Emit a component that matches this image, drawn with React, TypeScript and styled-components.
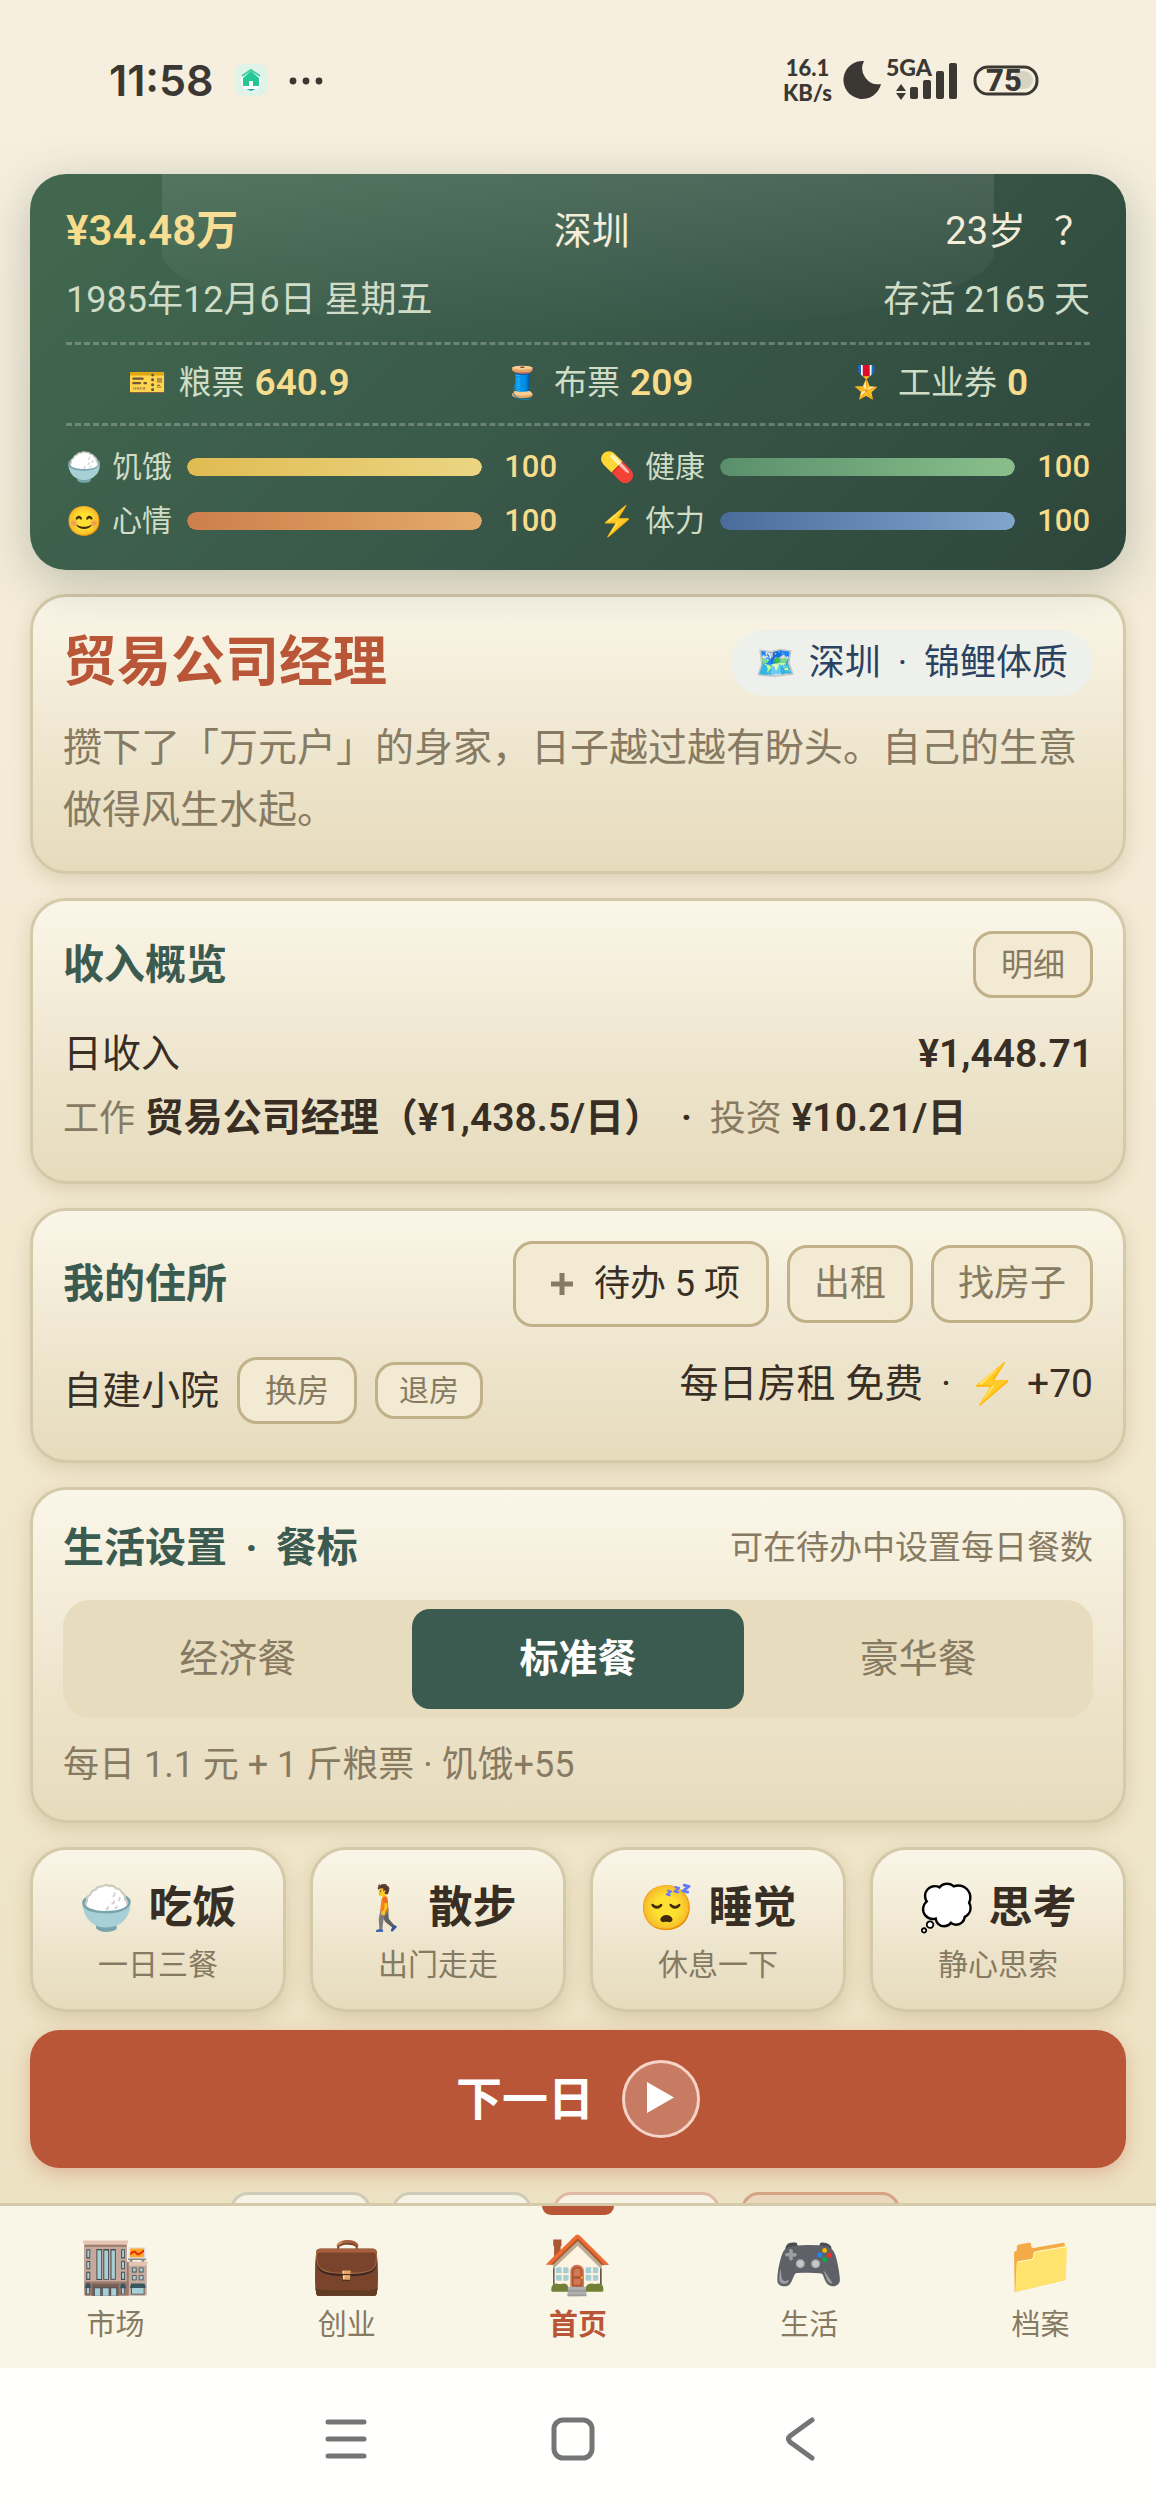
import React, { useState } from "react";
import styled, { createGlobalStyle, css } from "styled-components";

const c = {
  ink: "#382e24",
  muted: "#877a62",
  green: "#3c5b50",
  red: "#b95638",
  gold: "#f7dc8c",
  mint: "#cfdcc6",
  cream: "#f3ecd8",
  line: "#d4c9a8",
  buttonLine: "#c1b189",
  buttonFill: "#f2ead3",
  status: "#3b3833",
};

const Global = createGlobalStyle`
  *, *::before, *::after { box-sizing: border-box; }
  body { margin: 0; }
  h1, h2, p, dl, dd, dt { margin: 0; font-weight: inherit; }
  button { font: inherit; color: inherit; border: 0; background: none; padding: 0; cursor: pointer; }
  b, strong { font-weight: 600; }
`;

const Shell = styled.div`
  display: flex;
  flex-direction: column;
  height: 100vh;
  color: ${c.ink};
  font-family: Roboto, "Noto Sans CJK SC", "Noto Color Emoji", sans-serif;
  font-size: 39px;
  line-height: 60px;
  background: linear-gradient(180deg, #f6efdf 0%, #f2e9d1 50%, #ece1c1 90%);
`;

/* ---------- status bar ---------- */
const StatusBar = styled.header`
  display: flex;
  justify-content: space-between;
  align-items: center;
  flex: none;
  padding: 48px 117px 62px 109px;
  color: ${c.status};
`;

const StatusGroup = styled.div<{ $gap: number }>`
  display: flex;
  align-items: center;
  gap: ${(p) => p.$gap}px;
  height: 64px;
`;

const Clock = styled.time`
  font: 600 43px/64px Inter, sans-serif;
`;

const Speed = styled.div`
  font: 900 22px/25px Lato, sans-serif;
  text-align: center;
`;

const Signal = styled.svg`
  display: block;
  flex: none;
`;

/* ---------- content ---------- */
const Main = styled.main`
  display: flex;
  flex-direction: column;
  flex: 1;
  gap: 24px;
  min-height: 0;
  padding: 0 30px;
  margin-top: -50px;
  padding-top: 50px;
  overflow: hidden auto;
  scrollbar-width: none;
  & > * { flex: none; }
`;

const Hero = styled.section`
  position: relative;
  z-index: 1;
  padding: 24px 36px 22px;
  border-radius: 36px;
  color: ${c.cream};
  background: linear-gradient(135deg, #42694f 0%, #3a5a4a 45%, #2d463b 100%);
  box-shadow: 0 12px 48px rgba(45, 70, 59, 0.28);
  &::before {
    content: "";
    position: absolute;
    top: 0;
    left: 12%;
    right: 12%;
    height: 40%;
    border-radius: 0 0 50% 50%;
    background: linear-gradient(180deg, rgba(255, 255, 255, 0.1), rgba(255, 255, 255, 0));
  }
`;

const HeroTop = styled.div`
  display: flex;
  justify-content: space-between;
  align-items: center;
  height: 66px;
  font-size: 38px;
`;

const Money = styled.strong`
  font-size: 42px;
  color: ${c.gold};
`;

const Age = styled.div`
  display: flex;
  gap: 28px;
`;

const HelpButton = styled.button`
  width: 36px;
`;

const HeroDate = styled.div`
  display: flex;
  justify-content: space-between;
  align-items: center;
  height: 78px;
  padding-bottom: 6px;
  font-size: 36px;
  color: ${c.mint};
`;

const Tickets = styled.dl`
  display: flex;
  justify-content: space-around;
  align-items: center;
  gap: 30px;
  height: 84px;
  padding-bottom: 2px;
  border: dashed rgba(255, 255, 255, 0.25);
  border-width: 3px 0;
`;

const Ticket = styled.div`
  display: flex;
  align-items: center;
  gap: 10px;
  font-size: 33px;
  dt { display: flex; gap: 12px; color: ${c.mint}; }
  dd { font-size: 37px; font-weight: 600; color: ${c.gold}; }
`;

const TicketIcon = styled.span`
  font-size: 31px;
`;

const Stats = styled.div`
  display: grid;
  grid-template-columns: 1fr 1fr;
  column-gap: 42px;
  padding-top: 14px;
`;

const Stat = styled.label`
  display: grid;
  grid-template-columns: 109px 1fr 63px;
  align-items: center;
  column-gap: 12px;
  height: 54px;
  font-size: 30px;
  line-height: 54px;
  color: ${c.mint};
`;

const StatName = styled.span`
  display: flex;
  gap: 8px;
  white-space: nowrap;
  i { font-style: normal; font-size: 29px; width: 38px; }
`;

const Meter = styled.progress<{ $from: string; $to: string }>`
  appearance: none;
  display: block;
  width: 100%;
  height: 18px;
  border: 0;
  border-radius: 9px;
  overflow: hidden;
  background: rgba(0, 0, 0, 0.2);
  &::-webkit-progress-bar { background: transparent; }
  &::-webkit-progress-value {
    border-radius: 9px;
    background: linear-gradient(90deg, ${(p) => p.$from}, ${(p) => p.$to});
  }
`;

const StatValue = styled.b`
  font-size: 31px;
  font-weight: 500;
  text-align: right;
  color: ${c.gold};
`;

const surface = css`
  border: 3px solid ${c.line};
  border-radius: 36px;
  background: linear-gradient(180deg, #faf6e8 0%, #f7f1e0 18%, #ece3ca 65%, #e7dbbc 100%);
  background-origin: border-box;
  box-shadow: 0 6px 18px rgba(120, 95, 45, 0.18);
`;

const Card = styled.section`
  ${surface}
  padding: 30px 30px;
`;

const Row = styled.div<{ $h?: number; $mt?: number; $top?: boolean }>`
  display: flex;
  justify-content: space-between;
  align-items: ${(p) => (p.$top ? "flex-start" : "center")};
  min-height: ${(p) => p.$h ?? 64}px;
  margin-top: ${(p) => p.$mt ?? 0}px;
`;

const JobTitle = styled.h1`
  font-size: 54px;
  line-height: 72px;
  font-weight: 700;
  color: ${c.red};
`;

const Tag = styled.span`
  display: flex;
  gap: 12px;
  padding: 0 25px;
  border-radius: 33px;
  font-size: 36px;
  line-height: 66px;
  color: #2c4261;
  background: #eef1eb;
  i { font-style: normal; font-size: 33px; }
`;

const Dot = styled.span`
  margin: 0 8px;
  &::before { content: "·"; }
`;

const Story = styled.p`
  margin-top: 18px;
  line-height: 62px;
  color: ${c.muted};
`;

const Heading = styled.h2`
  font-size: 41px;
  line-height: 56px;
  font-weight: 700;
  color: ${c.green};
`;

const Group = styled.div`
  display: flex;
  align-items: center;
  gap: 18px;
`;

const sizes = {
  small: { h: 57, px: 21, fs: 30 },
  medium: { h: 67, px: 25, fs: 32 },
  large: { h: 78, px: 24, fs: 36 },
  wide: { h: 86, px: 26, fs: 36 },
};

const OutlineButton = styled.button<{ $size: keyof typeof sizes; $strong?: boolean }>`
  display: flex;
  align-items: center;
  gap: 20px;
  height: ${(p) => sizes[p.$size].h}px;
  padding: 0 ${(p) => sizes[p.$size].px}px;
  border: 3px solid ${c.buttonLine};
  border-radius: 20px;
  font-size: ${(p) => sizes[p.$size].fs}px;
  line-height: 48px;
  color: ${(p) => (p.$strong ? c.ink : c.muted)};
  background: ${c.buttonFill};
  white-space: nowrap;
`;

const Plus = styled.svg`
  display: block;
  margin-left: 8px;
`;

const Rent = styled.span`
  line-height: 54px;
`;

const Breakdown = styled.p`
  line-height: 64px;
`;

const Soft = styled.span`
  font-size: 36px;
  color: ${c.muted};
`;

const Hint = styled.span`
  font-size: 33px;
  line-height: 56px;
  color: ${c.muted};
`;

const Segments = styled.div`
  display: grid;
  grid-template-columns: repeat(3, 1fr);
  gap: 9px;
  margin-top: 24px;
  padding: 9px;
  border-radius: 27px;
  background: #e7dcbe;
`;

const Segment = styled.button<{ $on: boolean }>`
  height: 100px;
  border-radius: 18px;
  font-weight: ${(p) => (p.$on ? 700 : 400)};
  color: ${(p) => (p.$on ? "#fff" : c.muted)};
  background: ${(p) => (p.$on ? c.green : "transparent")};
`;

const MealNote = styled.p`
  margin-top: 22px;
  font-size: 36px;
  line-height: 50px;
  color: ${c.muted};
`;

const Actions = styled.div`
  display: grid;
  grid-template-columns: repeat(4, 1fr);
  gap: 24px;
`;

const Action = styled.button`
  ${surface}
  display: flex;
  flex-direction: column;
  align-items: center;
  gap: 4px;
  padding: 28px 0 21px;
`;

const ActionName = styled.span`
  display: flex;
  gap: 14px;
  font-size: 44px;
  line-height: 60px;
  font-weight: 700;
`;

const ActionHint = styled.span`
  font-size: 30px;
  line-height: 46px;
  color: ${c.muted};
`;

const NextDay = styled.button`
  display: flex;
  justify-content: center;
  align-items: center;
  gap: 28px;
  height: 138px;
  margin-top: -6px;
  border-radius: 30px;
  font-size: 46px;
  font-weight: 700;
  color: #fff;
  background: ${c.red};
  box-shadow: 0 6px 18px rgba(185, 86, 56, 0.3);
`;

const Chips = styled.div`
  display: flex;
  justify-content: center;
  gap: 21px;
  padding-right: 26px;
`;

const Chip = styled.button<{ $w: number; $line: string; $fill: string }>`
  width: ${(p) => p.$w}px;
  height: 72px;
  border: 3px solid ${(p) => p.$line};
  border-radius: 18px;
  background: ${(p) => p.$fill};
`;

/* ---------- bottom bars ---------- */
const TabBar = styled.nav`
  display: grid;
  grid-template-columns: repeat(5, 1fr);
  flex: none;
  height: 165px;
  border-top: 3px solid ${c.line};
  background: #faf6e7;
`;

const Tab = styled.a<{ $on: boolean }>`
  position: relative;
  display: flex;
  flex-direction: column;
  align-items: center;
  gap: 3px;
  padding-top: 23px;
  font-size: 29px;
  line-height: 42px;
  text-decoration: none;
  font-weight: ${(p) => (p.$on ? 700 : 400)};
  color: ${(p) => (p.$on ? c.red : c.muted)};
  ${(p) =>
    p.$on &&
    css`
      &::before {
        content: "";
        position: absolute;
        top: 0;
        width: 72px;
        height: 9px;
        border-radius: 0 0 9px 9px;
        background: ${c.red};
      }
    `}
`;

const TabIcon = styled.span`
  font-size: 57px;
  line-height: 72px;
`;

const SystemBar = styled.footer`
  display: flex;
  justify-content: center;
  align-items: center;
  flex: none;
  height: 142px;
  padding-right: 10px;
  background: #fffffe;
`;

const SystemButton = styled.button`
  display: flex;
  justify-content: center;
  width: 227px;
`;

const stats = [
  { icon: "🍚", name: "饥饿", value: 100, from: "#e0bb52", to: "#ebd583" },
  { icon: "💊", name: "健康", value: 100, from: "#5a8f6c", to: "#8abf8c" },
  { icon: "😊", name: "心情", value: 100, from: "#cd7f4b", to: "#e4aa6c" },
  { icon: "⚡", name: "体力", value: 100, from: "#496c9c", to: "#82a5cc" },
];

const tickets = [
  ["🎫", "粮票", "640.9"],
  ["🧵", "布票", "209"],
  ["🎖️", "工业券", "0"],
];

const actions = [
  ["🍚", "吃饭", "一日三餐"],
  ["🚶", "散步", "出门走走"],
  ["😴", "睡觉", "休息一下"],
  ["💭", "思考", "静心思索"],
];

const tabs = [
  ["🏬", "市场"],
  ["💼", "创业"],
  ["🏠", "首页"],
  ["🎮", "生活"],
  ["📁", "档案"],
];

const chips = [
  { label: "存档", w: 141, line: "#cfcbb9", fill: "#f7f3e4" },
  { label: "读档", w: 140, line: "#cfcbb9", fill: "#f7f3e4" },
  { label: "排行榜", w: 167, line: "#dfb9a4", fill: "#f7f3e4" },
  { label: "重新开始", w: 159, line: "#d4a384", fill: "#ebd8bc" },
];

const meals = ["经济餐", "标准餐", "豪华餐"];

export default function App() {
  const [meal, setMeal] = useState(1);
  const [tab, setTab] = useState(2);

  return (
    <Shell>
      <Global />
      <StatusBar>
        <StatusGroup $gap={21}>
          <Clock>11:58</Clock>
          <Signal width="32" height="32" viewBox="0 0 32 32" aria-hidden="true">
            <rect width="32" height="32" rx="8" fill="#dff3e8" />
            <circle cx="16" cy="17" r="10" fill="#fff" />
            <path d="M7 12L16 6l9 6" fill="none" stroke="#3ccfa2" strokeWidth="2" />
            <path d="M16 7l8 7v8H8v-8z" fill="#22c794" />
            <path d="M14 22v-5h4v5z" fill="#fff" />
            <path d="M11 25h10l-5 2z" fill="#22a0b0" />
          </Signal>
          <Signal width="36" height="10" viewBox="0 0 36 10" aria-hidden="true" fill={c.status}>
            <circle cx="5" cy="6" r="3.400" />
            <circle cx="18" cy="6" r="3.400" />
            <circle cx="31" cy="6" r="3.400" />
          </Signal>
        </StatusGroup>
        <StatusGroup $gap={4}>
          <Speed>
            16.1
            <br />
            KB/s
          </Speed>
          <Signal width="46" height="40" viewBox="-8 0 46 40" aria-hidden="true">
            <path d="M20 1A19 19 0 1 0 37 24A16 16 0 0 1 20 1Z" fill={c.status} />
          </Signal>
          <Signal width="83" height="52" viewBox="0 0 83 52" aria-label="5GA" fill={c.status}>
            <text x="0" y="22" fontFamily="Lato" fontSize="23" fontWeight="900">5GA</text>
            <path d="M15 30l5 7H10zM15 46l5-7H10z" />
            <rect x="24" y="33" width="8" height="12" rx="2" />
            <rect x="37" y="26" width="8" height="19" rx="2" />
            <rect x="50" y="17" width="8" height="28" rx="2" />
            <rect x="63" y="9" width="8" height="36" rx="2" />
          </Signal>
          <Signal width="66" height="40" viewBox="0 0 66 40" aria-label="75">
            <path d="M42 11h9a9 9 0 0 1 0 18h-9z" fill="#d9d3c2" />
            <rect x="2" y="7" width="62" height="27" rx="13" fill="none" stroke={c.status} strokeWidth="3" />
            <text x="31" y="31" textAnchor="middle" fontFamily="Roboto" fontSize="31" fontWeight="800" fill={c.status}>75</text>
          </Signal>
        </StatusGroup>
      </StatusBar>

      <Main>
        <Hero>
          <HeroTop>
            <Money>¥34.48万</Money>
            <span>深圳</span>
            <Age>
              <span>23岁</span>
              <HelpButton type="button">？</HelpButton>
            </Age>
          </HeroTop>
          <HeroDate>
            <span>1985年12月6日 星期五</span>
            <span>存活 2165 天</span>
          </HeroDate>
          <Tickets>
            {tickets.map(([icon, name, value]) => (
              <Ticket key={name}>
                <dt>
                  <TicketIcon>{icon}</TicketIcon>
                  {name}
                </dt>
                <dd>{value}</dd>
              </Ticket>
            ))}
          </Tickets>
          <Stats>
            {stats.map((s) => (
              <Stat key={s.name}>
                <StatName>
                  <i>{s.icon}</i>
                  {s.name}
                </StatName>
                <Meter value={s.value} max={100} $from={s.from} $to={s.to} />
                <StatValue>{s.value}</StatValue>
              </Stat>
            ))}
          </Stats>
        </Hero>

        <Card>
          <Row $h={72}>
            <JobTitle>贸易公司经理</JobTitle>
            <Tag>
              <i>🗺️</i>
              <span>
                深圳 <Dot /> 锦鲤体质
              </span>
            </Tag>
          </Row>
          <Story>攒下了「万元户」的身家，日子越过越有盼头。自己的生意做得风生水起。</Story>
        </Card>

        <Card>
          <Row $h={67}>
            <Heading>收入概览</Heading>
            <OutlineButton type="button" $size="medium">明细</OutlineButton>
          </Row>
          <Row $mt={24}>
            <span>日收入</span>
            <b>¥1,448.71</b>
          </Row>
          <Breakdown>
            <Soft>工作</Soft> <b>贸易公司经理（¥1,438.5/日） <Dot /> </b>
            <Soft>投资</Soft> <b>¥10.21/日</b>
          </Breakdown>
        </Card>

        <Card>
          <Row $h={86}>
            <Heading>我的住所</Heading>
            <Group>
              <OutlineButton type="button" $size="wide" $strong>
                <Plus width="24" height="24" viewBox="0 0 24 24" aria-hidden="true">
                  <path d="M12 1v22M1 12h22" stroke={c.muted} strokeWidth="5" />
                </Plus>
                待办 5 项
              </OutlineButton>
              <OutlineButton type="button" $size="large">出租</OutlineButton>
              <OutlineButton type="button" $size="large">找房子</OutlineButton>
            </Group>
          </Row>
          <Row $h={73} $mt={30} $top>
            <Group>
              <span>自建小院</span>
              <OutlineButton type="button" $size="medium">换房</OutlineButton>
              <OutlineButton type="button" $size="small">退房</OutlineButton>
            </Group>
            <Rent>
              每日房租 免费 <Dot /> ⚡ +70
            </Rent>
          </Row>
        </Card>

        <Card>
          <Row $h={56}>
            <Heading>
              生活设置 <Dot /> 餐标
            </Heading>
            <Hint>可在待办中设置每日餐数</Hint>
          </Row>
          <Segments>
            {meals.map((m, i) => (
              <Segment key={m} type="button" $on={i === meal} onClick={() => setMeal(i)}>
                {m}
              </Segment>
            ))}
          </Segments>
          <MealNote>每日 1.1 元 + 1 斤粮票 · 饥饿+55</MealNote>
        </Card>

        <Actions>
          {actions.map(([icon, name, hint]) => (
            <Action key={name} type="button">
              <ActionName>
                <span>{icon}</span>
                {name}
              </ActionName>
              <ActionHint>{hint}</ActionHint>
            </Action>
          ))}
        </Actions>

        <NextDay type="button">
          下一日
          <svg width="78" height="78" viewBox="0 0 78 78" aria-hidden="true">
            <circle cx="39" cy="39" r="37.500" fill="rgba(255,255,255,.22)" stroke="#f6d3c6" strokeWidth="3" />
            <path d="M25 22v31l27-15.500z" fill="#fff" />
          </svg>
        </NextDay>

        <Chips>
          {chips.map((chip) => (
            <Chip key={chip.label} type="button" aria-label={chip.label} $w={chip.w} $line={chip.line} $fill={chip.fill} />
          ))}
        </Chips>
      </Main>

      <TabBar>
        {tabs.map(([icon, name], i) => (
          <Tab key={name} href="#" $on={i === tab} onClick={() => setTab(i)}>
            <TabIcon>{icon}</TabIcon>
            {name}
          </Tab>
        ))}
      </TabBar>

      <SystemBar>
        <SystemButton type="button" aria-label="菜单">
          <svg width="48" height="48" viewBox="0 0 48 48" stroke="#757575" strokeWidth="5" strokeLinecap="round">
            <path d="M6 7h36M6 24h36M6 41h36" />
          </svg>
        </SystemButton>
        <SystemButton type="button" aria-label="主屏幕">
          <svg width="48" height="48" viewBox="0 0 48 48" fill="none" stroke="#757575" strokeWidth="5">
            <rect x="5" y="5" width="38" height="38" rx="9" />
          </svg>
        </SystemButton>
        <SystemButton type="button" aria-label="返回">
          <svg width="48" height="48" viewBox="0 0 48 48" fill="none" stroke="#757575" strokeWidth="5" strokeLinecap="round" strokeLinejoin="round">
            <path d="M36 5L14 21Q11 24 14 27L36 43" />
          </svg>
        </SystemButton>
      </SystemBar>
    </Shell>
  );
}
